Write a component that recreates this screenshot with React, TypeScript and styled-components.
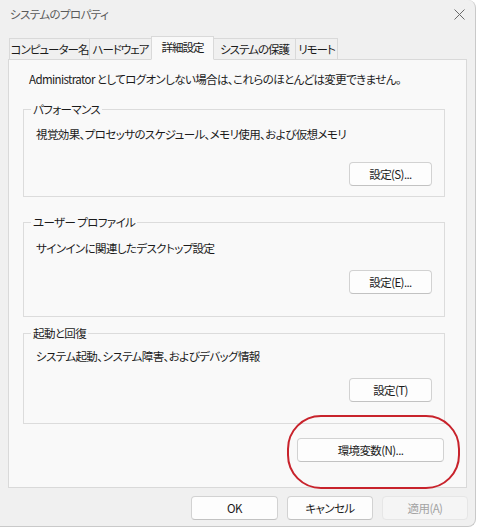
import React from "react";
import styled, { createGlobalStyle } from "styled-components";

const Global = createGlobalStyle`
  html, body { margin: 0; padding: 0; background: #ffffff; }
  body {
    font-family: "Noto Sans CJK JP", "Noto Sans", sans-serif;
    font-size: 11.5px;
    letter-spacing: -0.6px;
    color: #1b1b1b;
    font-feature-settings: "palt";
  }
`;

const Window = styled.div`
  position: relative;
  width: 476px;
  height: 527px;
  box-sizing: border-box;
  background: #f0f0f0;
  border: 1px solid #c9c9c9;
  border-left: none;
  border-top: none;
  border-radius: 0 8px 8px 0;
  display: flex;
  flex-direction: column;
`;

const TitleBar = styled.div`
  height: 28px;
  display: flex;
  align-items: center;
  justify-content: space-between;
  padding: 0 9px 0 10px;
`;

const Title = styled.span`
  color: #5a5a5a;
`;

const CloseBtn = styled.div`
  width: 12px;
  height: 12px;
  display: flex;
  align-items: center;
  justify-content: center;
  margin-right: 1px;
`;

const TabRow = styled.div`
  display: flex;
  align-items: flex-end;
  height: 31px;
  padding: 0 0 0 10px;
`;

const Tab = styled.div<{ $active?: boolean; $w: number }>`
  width: ${(p) => p.$w}px;
  box-sizing: border-box;
  height: ${(p) => (p.$active ? 24 : 21)}px;
  display: flex;
  align-items: center;
  justify-content: center;
  padding-bottom: ${(p) => (p.$active ? 3 : 0)}px;
  background: ${(p) => (p.$active ? "#f9f9f9" : "#f0f0f0")};
  border: 1px solid #d9d9d9;
  border-bottom: ${(p) => (p.$active ? "1px solid #f9f9f9" : "none")};
  margin-left: -1px;
  margin-bottom: ${(p) => (p.$active ? -1 : 0)}px;
  position: relative;
  z-index: ${(p) => (p.$active ? 2 : 1)};
  white-space: nowrap;
  letter-spacing: -1px;
`;

const Panel = styled.div`
  margin: 0 8px;
  height: 429px;
  box-sizing: border-box;
  background: #f9f9f9;
  border: 1px solid #d9d9d9;
  display: flex;
  flex-direction: column;
  padding: 11px 21px 0 14px;
`;

const Notice = styled.div`
  line-height: 16px;
  padding-left: 6px;
  margin-bottom: 22px;
  white-space: nowrap;
`;

const Group = styled.div<{ $mt: number; $pt: number; $gap: number; $pb: number }>`
  position: relative;
  margin-top: ${(p) => p.$mt}px;
  border: 1px solid #dcdcdc;
  padding: ${(p) => p.$pt}px 12px ${(p) => p.$pb}px 12px;
  display: flex;
  flex-direction: column;
  gap: ${(p) => p.$gap}px;
`;

const Legend = styled.span`
  position: absolute;
  top: -9px;
  left: 7px;
  padding: 0 2px;
  line-height: 16px;
  background: #f9f9f9;
  white-space: nowrap;
`;

const Desc = styled.div`
  line-height: 16px;
  white-space: nowrap;
`;

const ButtonRow = styled.div`
  display: flex;
  justify-content: flex-end;
`;

const Button = styled.button<{ $w: number; $disabled?: boolean }>`
  width: ${(p) => p.$w}px;
  height: 24px;
  box-sizing: border-box;
  font-family: inherit;
  font-size: inherit;
  letter-spacing: inherit;
  font-feature-settings: "palt";
  color: ${(p) => (p.$disabled ? "#a3a3a3" : "#1b1b1b")};
  background: ${(p) => (p.$disabled ? "#f5f5f5" : "#fdfdfd")};
  border: 1px solid ${(p) => (p.$disabled ? "#e6e6e6" : "#d2d2d2")};
  border-bottom-color: ${(p) => (p.$disabled ? "#e6e6e6" : "#c2c2c2")};
  border-radius: 4px;
  padding: 0;
  display: flex;
  align-items: center;
  justify-content: center;
`;

const EnvRow = styled.div`
  display: flex;
  justify-content: flex-end;
  margin-top: 14px;
  padding-right: 1px;
`;

const Footer = styled.div`
  display: flex;
  justify-content: flex-end;
  gap: 9px;
  padding: 8px 7px 0 0;
`;

const Highlight = styled.div`
  position: absolute;
  left: 287px;
  top: 415px;
  width: 173px;
  height: 74px;
  box-sizing: border-box;
  border: 2px solid #c8232c;
  border-radius: 34px;
  pointer-events: none;
`;

export default function App() {
  return (
    <>
      <Global />
      <Window>
        <TitleBar>
          <Title>システムのプロパティ</Title>
          <CloseBtn>
            <svg width="11" height="11" viewBox="0 0 11 11">
              <path d="M0.5 0.5 L10.5 10.5 M10.5 0.5 L0.5 10.5" stroke="#6a6a6a" strokeWidth="1" />
            </svg>
          </CloseBtn>
        </TitleBar>
        <TabRow>
          <Tab $w={81}>コンピューター名</Tab>
          <Tab $w={63}>ハードウェア</Tab>
          <Tab $w={63} $active>詳細設定</Tab>
          <Tab $w={83}>システムの保護</Tab>
          <Tab $w={43}>リモート</Tab>
        </TabRow>
        <Panel>
          <Notice>Administrator としてログオンしない場合は、これらのほとんどは変更できません。</Notice>
          <Group $mt={0} $pt={16} $gap={20} $pb={10}>
            <Legend>パフォーマンス</Legend>
            <Desc>視覚効果、プロセッサのスケジュール、メモリ使用、および仮想メモリ</Desc>
            <ButtonRow>
              <Button $w={83}>設定(S)...</Button>
            </ButtonRow>
          </Group>
          <Group $mt={25} $pt={17} $gap={14} $pb={22}>
            <Legend>ユーザー プロファイル</Legend>
            <Desc>サインインに関連したデスクトップ設定</Desc>
            <ButtonRow>
              <Button $w={83}>設定(E)...</Button>
            </ButtonRow>
          </Group>
          <Group $mt={16} $pt={14} $gap={14} $pb={21}>
            <Legend>起動と回復</Legend>
            <Desc>システム起動、システム障害、およびデバッグ情報</Desc>
            <ButtonRow>
              <Button $w={83}>設定(T)</Button>
            </ButtonRow>
          </Group>
          <EnvRow>
            <Button $w={147}>環境変数(N)...</Button>
          </EnvRow>
        </Panel>
        <Footer>
          <Button $w={87}>OK</Button>
          <Button $w={86}>キャンセル</Button>
          <Button $w={86} $disabled>適用(A)</Button>
        </Footer>
        <Highlight />
      </Window>
    </>
  );
}
